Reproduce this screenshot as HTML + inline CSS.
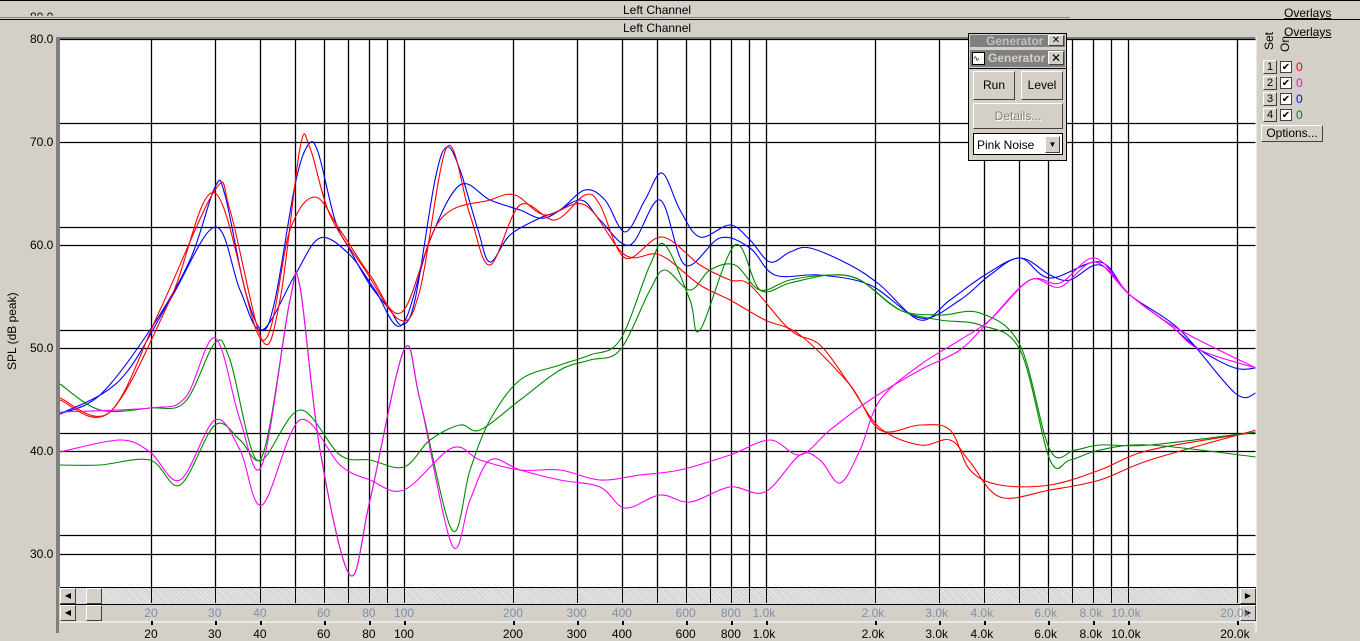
<!DOCTYPE html>
<html><head><meta charset="utf-8"><style>
body{margin:0;width:1360px;height:633px;overflow:hidden;background:#d4d0c8;font-family:"Liberation Sans",sans-serif;font-size:12px;position:relative}
.a{position:absolute}
.t{position:absolute;color:#000;white-space:nowrap}
.ov{text-decoration:underline;font-size:12px}
.btn{position:absolute;background:#d4d0c8;border-top:1px solid #fff;border-left:1px solid #fff;border-right:1px solid #404040;border-bottom:1px solid #404040;box-sizing:border-box;text-align:center}
.hatch{background:repeating-linear-gradient(45deg,#c8c8c8 0 1px,#f0f0f0 1px 2px)}
</style></head><body>
<div class="a" style="left:0;top:0;width:1360px;height:1px;background:#000"></div>
<div class="a" style="left:0;top:19px;width:1360px;height:1px;background:#000"></div>
<div class="a" style="left:0;top:17px;width:1070px;height:1px;background:#808080"></div>
<div class="t" style="left:623px;top:3px">Left Channel</div>
<div class="t" style="left:623px;top:21px">Left Channel</div>
<div class="t ov" style="left:1284px;top:6px">Overlays</div>
<div class="t ov" style="left:1284px;top:25px">Overlays</div>
<div class="t" style="left:30px;top:10px;font-size:12px;color:#000;clip-path:inset(0 0 60% 0)">80.0</div>
<svg class="a" style="left:0;top:0" width="1360" height="633" id="s">
<rect x="58" y="37" width="1198" height="550" fill="#808080"/>
<rect x="60" y="39" width="1196" height="548" fill="#fff"/>
<g id="grid" stroke="#000" stroke-width="1.3"></g>
<g id="curves" fill="none" stroke-width="1.1"></g>
<line x1="1256" y1="37" x2="1256" y2="633" stroke="#fff"/>
</svg>
<div class="a hatch" style="left:60px;top:587px;width:1196px;height:16px;border-top:1px solid #000"></div>
<svg class="a" style="left:60px;top:587px" width="1196" height="16" id="sg"></svg>
<div class="btn" style="left:60px;top:588px;width:16px;height:16px;font-size:8px;line-height:14px">◀</div>
<div class="btn" style="left:86px;top:588px;width:16px;height:16px"></div>
<div class="btn" style="left:1240px;top:588px;width:16px;height:16px;font-size:8px;line-height:14px">▶</div>
<div class="a" style="left:60px;top:604px;width:1196px;height:1px;background:#000"></div>
<div class="btn" style="left:60px;top:605px;width:16px;height:16px;font-size:8px;line-height:14px">◀</div>
<div class="btn" style="left:86px;top:605px;width:16px;height:16px"></div>
<div class="btn" style="left:1240px;top:605px;width:16px;height:16px;font-size:8px;line-height:14px">▶</div>
<div class="a" style="left:60px;top:621px;width:1196px;height:2px;background:#e8e8e8"></div>
<div class="a" style="left:56px;top:37px;width:3px;height:596px;background:#808080"></div>
<div id="labs"></div>
<div class="t" style="left:5px;top:370px;transform:rotate(-90deg);transform-origin:0 0;font-size:12px">SPL (dB peak)</div>
<div class="a" style="left:968px;top:33px;width:99px;height:128px;background:#d4d0c8;border:1px solid #000;box-sizing:border-box"></div>
<div class="a" style="left:970px;top:35px;width:95px;height:12px;background:#808080;color:#c0c0c0;font-weight:bold;font-size:12px;line-height:12px;padding-left:16px;box-sizing:border-box;overflow:hidden">Generator</div>
<div class="a" style="left:970px;top:50px;width:95px;height:17px;background:#808080;color:#d4d0c8;font-weight:bold;font-size:12px;line-height:17px;padding-left:18px;box-sizing:border-box">Generator</div>
<div class="a" style="left:972px;top:52px;width:13px;height:13px;background:#fff;border:1px solid #000;box-sizing:border-box;font-size:8px;line-height:11px">∿</div>
<div class="btn" style="left:1048px;top:51px;width:16px;height:14px;font-size:12px;line-height:12px">✕</div>
<div class="btn" style="left:1048px;top:35px;width:16px;height:11px;font-size:10px;line-height:9px">✕</div>
<div class="a" style="left:969px;top:68px;width:97px;height:1px;background:#000"></div>
<div class="btn" style="left:973px;top:71px;width:42px;height:29px;line-height:27px;font-size:12px">Run</div>
<div class="btn" style="left:1021px;top:71px;width:42px;height:29px;line-height:27px;font-size:12px">Level</div>
<div class="btn" style="left:973px;top:103px;width:90px;height:26px;line-height:24px;color:#808080;text-shadow:1px 1px #fff">Details...</div>
<div class="a" style="left:973px;top:133px;width:90px;height:22px;border:1px solid #000;background:#fff;box-sizing:border-box"></div>
<div class="t" style="left:977px;top:138px">Pink Noise</div>
<div class="btn" style="left:1045px;top:136px;width:15px;height:17px;font-size:8px;line-height:15px">▼</div>
<div class="t" style="left:1262px;top:50px;transform:rotate(-90deg);transform-origin:0 0">Set</div>
<div class="t" style="left:1278px;top:52px;transform:rotate(-90deg);transform-origin:0 0">On</div>
<div id="ovl"></div>
<div class="btn" style="left:1261px;top:125px;width:62px;height:17px;line-height:15px">Options...</div>
<script>
var X=f=>404+362*Math.log10(f/100), Y=d=>39+(80-d)*10.3;
var g='',s='',L='';
var fr=[20,30,40,50,60,70,80,90,100,200,300,400,500,600,700,800,900,1000,2000,3000,4000,5000,6000,7000,8000,9000,10000,20000];
fr.forEach(f=>{var x=Math.round(X(f))+.5;g+=`<line x1="${x}" y1="39" x2="${x}" y2="587"/>`;s+=`<line x1="${x-60}" y1="0" x2="${x-60}" y2="16" stroke="#000"/>`;});
[80,70,60,50,40,30].forEach(d=>{var y=Math.round(Y(d))+.5;g+=`<line x1="60" y1="${y}" x2="1256" y2="${y}"/>`;L+=`<div class="t" style="left:30px;top:${y-8}px">${d.toFixed(1)}</div>`;});
[123,227,330,433,535].forEach(y=>g+=`<line x1="60" y1="${y+.5}" x2="1256" y2="${y+.5}"/>`);
document.getElementById('grid').innerHTML=g;document.getElementById('sg').innerHTML=s;
var lab={20:'20',30:'30',40:'40',60:'60',80:'80',100:'100',200:'200',300:'300',400:'400',600:'600',800:'800',1000:'1.0k',2000:'2.0k',3000:'3.0k',4000:'4.0k',6000:'6.0k',8000:'8.0k',10000:'10.0k',20000:'20.0k'};
for(var k in lab){var x=X(+k),w=lab[k].length*6.7;L+=`<div class="t" style="left:${x-w/2}px;top:606px;color:#8090a8">${lab[k]}</div><div class="t" style="left:${x-w/2}px;top:627px">${lab[k]}</div><div class="a" style="left:${Math.round(x)}px;top:621px;width:2px;height:4px;background:#000"></div>`;}
document.getElementById('labs').innerHTML=L;
var o='',cs=['#f00','#f0f','#00f','#080'];
for(var i=0;i<4;i++){var y=60+i*16;o+=`<div class="btn" style="left:1263px;top:${y}px;width:14px;height:14px;font-size:11px;line-height:12px">${i+1}</div><div class="a" style="left:1280px;top:${y+1}px;width:12px;height:12px;border:1px solid #404040;background:#fff;font-size:10px;line-height:11px;text-align:center;box-sizing:border-box">✔</div><div class="t" style="left:1296px;top:${y}px;color:${cs[i]}">0</div>`;}
document.getElementById('ovl').innerHTML=o;
function cr(p){var d=`M${p[0][0]},${p[0][1]}`;for(var i=0;i<p.length-1;i++){var p0=p[i-1]||p[i],p1=p[i],p2=p[i+1],p3=p[i+2]||p2;d+=` C${p1[0]+(p2[0]-p0[0])/6},${p1[1]+(p2[1]-p0[1])/6} ${p2[0]-(p3[0]-p1[0])/6},${p2[1]-(p3[1]-p1[1])/6} ${p2[0]},${p2[1]}`;}return d;}
var C=[
['#00f',[[60,414],[100,395],[150,330],[190,260],[215,187],[225,195],[245,290],[262,330],[275,300],[295,185],[308,145],[318,152],[335,220],[350,250],[370,285],[390,310],[402,325],[415,300],[435,180],[447,147],[460,170],[478,230],[490,262],[510,235],[540,218],[560,210],[585,190],[605,200],[625,232],[645,200],[662,173],[680,210],[700,237],[730,225],[750,240],[770,262],[790,252],[810,248],[850,265],[880,285],[920,320],[950,300],[985,275],[1020,258],[1050,275],[1070,280],[1100,265],[1130,295],[1170,325],[1200,350],[1235,368],[1256,368]]],
['#00f',[[60,414],[120,380],[170,300],[215,227],[240,290],[262,330],[295,275],[320,238],[350,255],[375,290],[402,325],[430,240],[460,185],[490,200],[520,210],[545,218],[580,200],[600,220],[630,245],[660,200],[685,265],[720,238],[750,248],[775,275],[820,275],[870,285],[920,318],[960,300],[990,275],[1020,258],[1050,278],[1100,262],[1130,295],[1180,330],[1235,393],[1256,393]]],
['#f00',[[60,398],[110,412],[160,310],[215,190],[230,210],[262,340],[280,300],[300,148],[310,148],[330,215],[365,270],[400,320],[420,290],[447,147],[470,215],[490,265],[520,205],[555,220],[585,195],[600,205],[625,258],[662,237],[700,265],[730,280],[750,285],[790,330],[820,345],[850,385],[880,428],[920,445],[950,440],[970,462],[1000,497],[1050,490],[1100,480],[1150,460],[1256,430]]],
['#f00',[[60,400],[110,412],[170,300],[215,193],[262,340],[290,230],[315,197],[340,230],[370,275],[402,312],[440,220],[490,200],[515,195],[545,215],[585,205],[625,255],[660,255],[700,285],[730,300],[765,320],[800,335],[850,385],[880,430],[920,425],[950,430],[970,470],[1000,485],[1050,485],[1100,470],[1150,450],[1256,432]]],
['#080',[[60,384],[100,410],[150,408],[185,402],[215,343],[230,360],[260,460],[290,300],[300,287],[320,450],[350,575],[370,500],[404,350],[420,400],[452,530],[470,470],[490,420],[520,380],[560,365],[590,355],[620,340],[650,265],[665,245],[690,300],[700,330],[735,245],[760,290],[790,283],[830,275],[860,280],[900,310],[940,315],[980,313],[1020,345],[1050,450],[1075,450],[1100,445],[1150,445],[1256,432]]],
['#080',[[60,465],[100,465],[150,460],[180,485],[215,425],[240,440],[262,460],[300,410],[340,455],[370,460],[404,467],[430,440],[460,425],[480,430],[520,400],[560,370],[590,360],[620,350],[650,290],[665,270],[690,290],[710,270],[735,265],[760,290],[790,280],[830,275],[860,280],[900,310],[940,320],[980,325],[1020,350],[1050,460],[1070,460],[1100,450],[1150,445],[1256,457]]],
['#f0f',[[60,412],[150,408],[185,398],[215,338],[240,420],[262,465],[290,300],[300,287],[320,450],[350,575],[370,500],[404,350],[420,400],[452,545],[470,500],[490,460],[520,470],[560,480],[600,487],[625,508],[660,495],[690,502],[730,487],[765,492],[800,455],[820,460],[840,483],[860,450],[880,400],[920,365],[960,340],[990,320],[1030,280],[1060,283],[1095,258],[1130,295],[1170,325],[1200,350],[1256,368]]],
['#f0f',[[60,452],[120,440],[150,452],[180,480],[215,420],[240,450],[262,505],[300,420],[340,465],[370,480],[404,490],[452,448],[480,460],[520,470],[560,470],[600,480],[640,475],[680,470],[730,455],[770,440],[800,455],[830,430],[870,400],[920,370],[960,350],[990,320],[1030,280],[1060,287],[1095,262],[1130,295],[1180,330],[1256,368]]]
];
document.getElementById('curves').innerHTML=C.map(c=>`<path stroke="${c[0]}" d="${cr(c[1])}"/>`).join('');
</script>
</body></html>
